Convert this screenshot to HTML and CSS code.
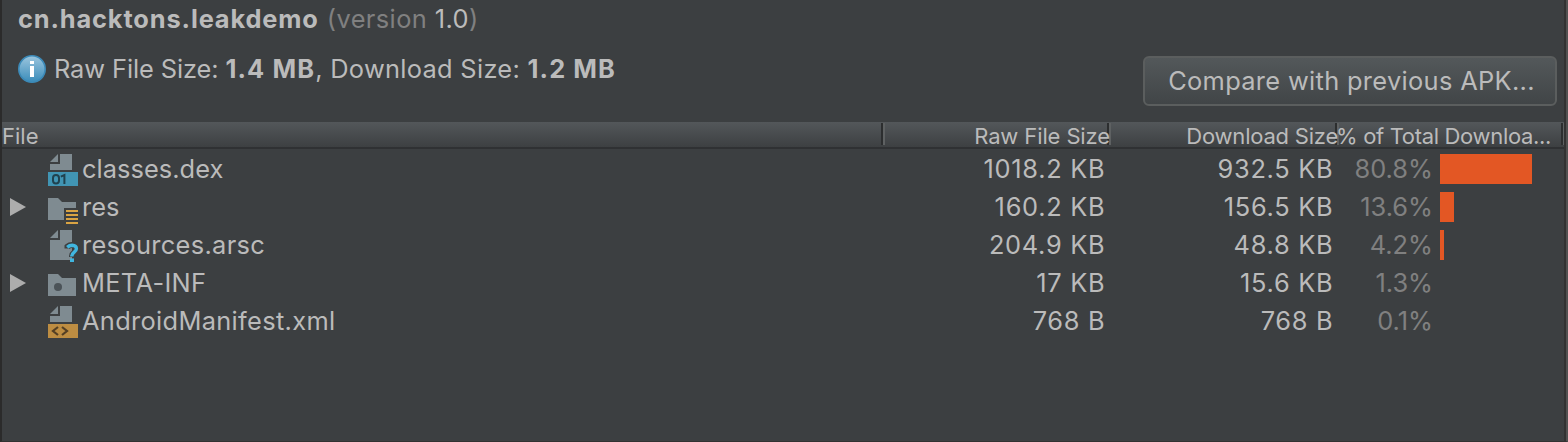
FILE: index.html
```html
<!DOCTYPE html>
<html lang="en">
<head>
<meta charset="utf-8">
<title>APK Analyzer</title>
<link rel="stylesheet" href="styles.css">
</head>
<body>
<main class="panel">
  <header class="summary">
    <div class="info">
      <div class="app"><span class="app-id">cn.hacktons.leakdemo</span><span class="version">(version <em>1.0</em>)</span></div>
      <div class="sizes">
        <svg class="info-icon" viewBox="0 0 28 28"><defs><linearGradient id="g" x1="0" y1="0" x2="0" y2="1"><stop offset="0" stop-color="#9cc6de"/><stop offset="1" stop-color="#3a8cba"/></linearGradient></defs><circle cx="14" cy="14" r="13.2" fill="url(#g)" stroke="#3c8ab8" stroke-width="1.6"/><path d="M12 6h4v3h-4zM12 11h4v11h-4z" fill="#fff"/></svg>
        <span class="sizes-text"><span class="raw-label">Raw File Size: </span><b>1.4 MB</b><span class="dl-label">, Download Size: </span><b>1.2 MB</b></span>
      </div>
    </div>
    <button class="compare">Compare with previous APK...</button>
  </header>
  <section class="table">
    <div class="head">
      <div class="h-file">File</div>
      <div class="h-raw">Raw File Size</div>
      <div class="h-dl">Download Size</div>
      <div class="h-pct">% of Total Downloa...</div>
      <div class="h-end"></div>
    </div>
    <div class="row">
      <div class="name"><span class="toggle"></span>
        <svg class="icon" viewBox="0 0 32 32"><path d="M2 8L10 0V8zM12 0H24V16H2V10H12z" fill="#7f8b91"/><path d="M0 18h30v14H0z" fill="#4195b4"/><g fill="none" stroke="#20424f" stroke-width="2"><rect x="5" y="21" width="6" height="8.4" rx="3"/><path d="M12.8 22.6L16.4 21V30"/></g></svg>
        <span class="tight">classes.dex</span></div>
      <div class="raw">1018.2 KB</div><div class="dl">932.5 KB</div><div class="pct">80.8%</div><div class="track"><i class="bar" style="width:92px"></i></div>
    </div>
    <div class="row">
      <div class="name"><span class="toggle"><svg class="arrow" viewBox="0 0 16 18"><path d="M0 0L16 9L0 18z"/></svg></span>
        <svg class="icon" viewBox="0 0 32 32"><path d="M0 6H10L14 10H28V16H16V28H0z" fill="#7f8b91"/><path d="M18 18h12v2H18zM18 22h12v2H18zM18 26h12v2H18zM18 30h12v2H18z" fill="#d9a343"/></svg>
        <span class="tight">res</span></div>
      <div class="raw">160.2 KB</div><div class="dl">156.5 KB</div><div class="pct">13.6%</div><div class="track"><i class="bar" style="width:14px"></i></div>
    </div>
    <div class="row">
      <div class="name"><span class="toggle"></span>
        <svg class="icon" viewBox="0 0 32 32"><path d="M2 8L10 0V8zM12 0H24V30H2V10H12z" fill="#7f8b91"/><path d="M19.5 18.5V16.6Q21.5 15 24 15Q28.5 15 28.5 19Q28.5 21 26 22.8Q24 24.2 24 27" fill="none" stroke="#3c3f41" stroke-width="6"/><path d="M19.2 17.2Q21.5 15.2 24.2 15.2Q28.4 15.4 28.4 18.8Q28.4 20.6 26 22.4Q23.8 24 23.8 26.6" fill="none" stroke="#40b6e0" stroke-width="3.4"/><path d="M22 28.4h4V32h-4z" fill="#40b6e0"/></svg>
        <span>resources.arsc</span></div>
      <div class="raw">204.9 KB</div><div class="dl">48.8 KB</div><div class="pct">4.2%</div><div class="track"><i class="bar" style="width:4px"></i></div>
    </div>
    <div class="row">
      <div class="name"><span class="toggle"><svg class="arrow" viewBox="0 0 16 18"><path d="M0 0L16 9L0 18z"/></svg></span>
        <svg class="icon" viewBox="0 0 32 32"><path d="M0 6H10L14 10H28V28H0z" fill="#7f8b91"/><circle cx="10" cy="19" r="4" fill="#4b5358"/></svg>
        <span>META-INF</span></div>
      <div class="raw">17 KB</div><div class="dl">15.6 KB</div><div class="pct">1.3%</div><div class="track"></div>
    </div>
    <div class="row">
      <div class="name"><span class="toggle"></span>
        <svg class="icon" viewBox="0 0 32 32"><path d="M2 8L10 0V8zM12 0H24V16H2V10H12z" fill="#7f8b91"/><path d="M0 18h30v14H0z" fill="#bd8d42"/><path d="M10 21L5 25L10 29M14 21L19 25L14 29" fill="none" stroke="#533f24" stroke-width="2.2"/></svg>
        <span>AndroidManifest.xml</span></div>
      <div class="raw">768 B</div><div class="dl">768 B</div><div class="pct">0.1%</div><div class="track"></div>
    </div>
  </section>
</main>
</body>
</html>
```
FILE: styles.css
```css
* { box-sizing: border-box; }
body { margin: 0; background: #3c3f41; color: #bbb; font: 430 25.4px/38px Inter, "Liberation Sans", sans-serif; }
.panel { height: 442px; border-left: 2px solid #2b2b2b; border-right: 2px solid #515151; border-bottom: 1px solid #323232; box-shadow: inset -2px 0 #323232; overflow: hidden; white-space: nowrap; }
.summary { display: flex; justify-content: space-between; height: 122px; padding-right: 9px; }
.info { padding-left: 16px; }
.app { height: 38px; display: flex; gap: 8px; }
.app-id { font-weight: 700; letter-spacing: 0.86px; }
.version { color: #808080; letter-spacing: 0.4px; }
.version em { color: #bbb; font-style: normal; }
.sizes { display: flex; align-items: center; gap: 8px; padding-top: 12px; }
.info-icon { width: 28px; height: 28px; }
.sizes-text b { letter-spacing: 1.1px; }
.raw-label { letter-spacing: -0.1px; }
.dl-label { letter-spacing: 0.3px; }
.compare { width: 414px; height: 50px; margin-top: 56px; padding: 0 0 0 3px; border: 2px solid #5b5e5e; border-radius: 6px; background: linear-gradient(#53585a, #414547); color: #bbb; font: inherit; letter-spacing: 0.33px; }
.head, .row { display: grid; grid-template-columns: 879px 226px 228px 226px 1fr; }
.head { height: 28px; margin-right: 2px; background: linear-gradient(#53575a, #3d4042 25px, #2f3133 25px, #2f3133 27px, #3c3f41 27px); font-size: 22px; line-height: 28px; }
.head > div + div { background: linear-gradient(90deg, #2c2e2f 2px, #5e6162 2px, #5e6162 4px, transparent 4px) 0 1px / 4px 22px no-repeat; }
.h-raw, .h-dl { text-align: right; }
.head .h-raw { z-index: 2; margin-right: -3px; letter-spacing: -0.12px; }
.head .h-dl { z-index: 1; margin-right: -3px; letter-spacing: -0.22px; }
.h-pct { padding-left: 1px; letter-spacing: -0.33px; }
.row { height: 38px; grid-template-columns: 880px 224px 228px 99px 1fr; }
.name { display: flex; letter-spacing: 0.33px; }
.tight { letter-spacing: 0.04px; }
.toggle { width: 46px; padding: 10px 0 0 8px; }
.arrow { display: block; width: 16px; height: 18px; fill: #adadad; }
.icon { width: 32px; height: 32px; margin: 4px 2px 0 0; }
.raw, .dl, .pct { text-align: right; }
.raw, .dl { padding-right: 0.6px; letter-spacing: 0.72px; }
.pct { color: #808080; }
.track { padding: 4px 0 0 7px; }
.bar { display: block; height: 30px; background: #e35724; }
```
